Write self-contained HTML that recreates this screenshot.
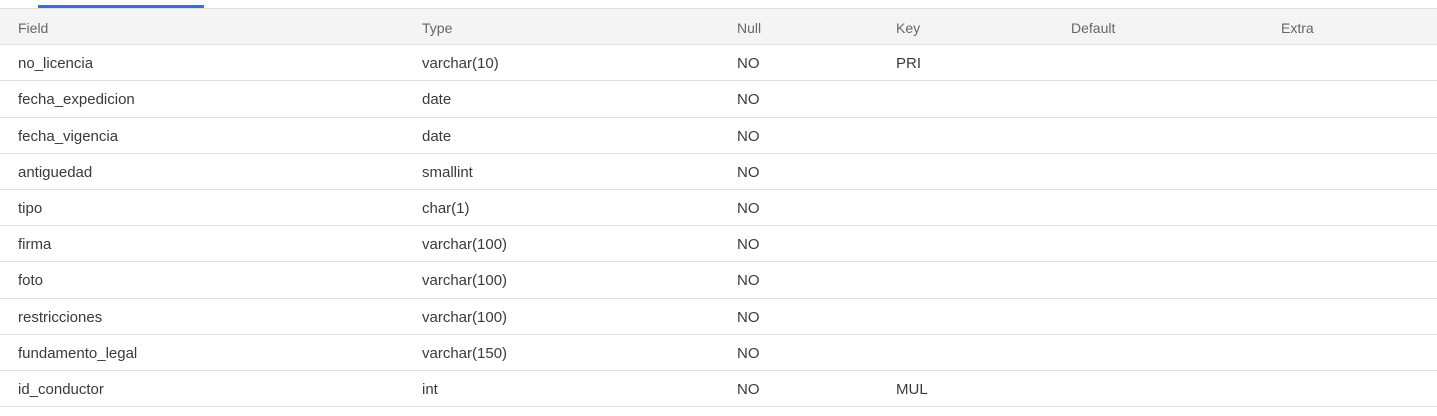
<!DOCTYPE html>
<html><head><style>
body{margin:0;width:1437px;height:416px;background:#fff;overflow:hidden;font-family:"Liberation Sans",sans-serif;position:relative}
.bar{position:absolute;left:38px;top:5px;width:166px;height:3px;background:#3b6fd6}
.r{position:absolute;left:0;width:1437px;border-bottom:1px solid #e0e0e0;box-sizing:border-box}
.h{background:#f4f4f4;border-top:1px solid #e0e0e0;color:#666;font-size:14px}
.c{position:absolute;top:2px;line-height:35px}
.b{color:#3a3a3a;font-size:15px}
</style></head><body>
<div class="bar"></div>
<div id="t"></div>
<script>
var rows=[["Field","Type","Null","Key","Default","Extra"],
["no_licencia","varchar(10)","NO","PRI","",""],
["fecha_expedicion","date","NO","","",""],
["fecha_vigencia","date","NO","","",""],
["antiguedad","smallint","NO","","",""],
["tipo","char(1)","NO","","",""],
["firma","varchar(100)","NO","","",""],
["foto","varchar(100)","NO","","",""],
["restricciones","varchar(100)","NO","","",""],
["fundamento_legal","varchar(150)","NO","","",""],
["id_conductor","int","NO","MUL","",""]];
var xs=[18,422,737,896,1071,1281],h="";
rows.forEach(function(r,i){var top=8+Math.round(i*36.2),bot=8+Math.round((i+1)*36.2);
h+='<div class="r '+(i?'b':'h')+'" style="top:'+top+'px;height:'+(bot-top+1)+'px">';
r.forEach(function(c,j){h+='<div class="c" style="left:'+xs[j]+'px">'+c+'</div>'});h+='</div>';});
document.getElementById('t').innerHTML=h;
</script>
</body></html>
